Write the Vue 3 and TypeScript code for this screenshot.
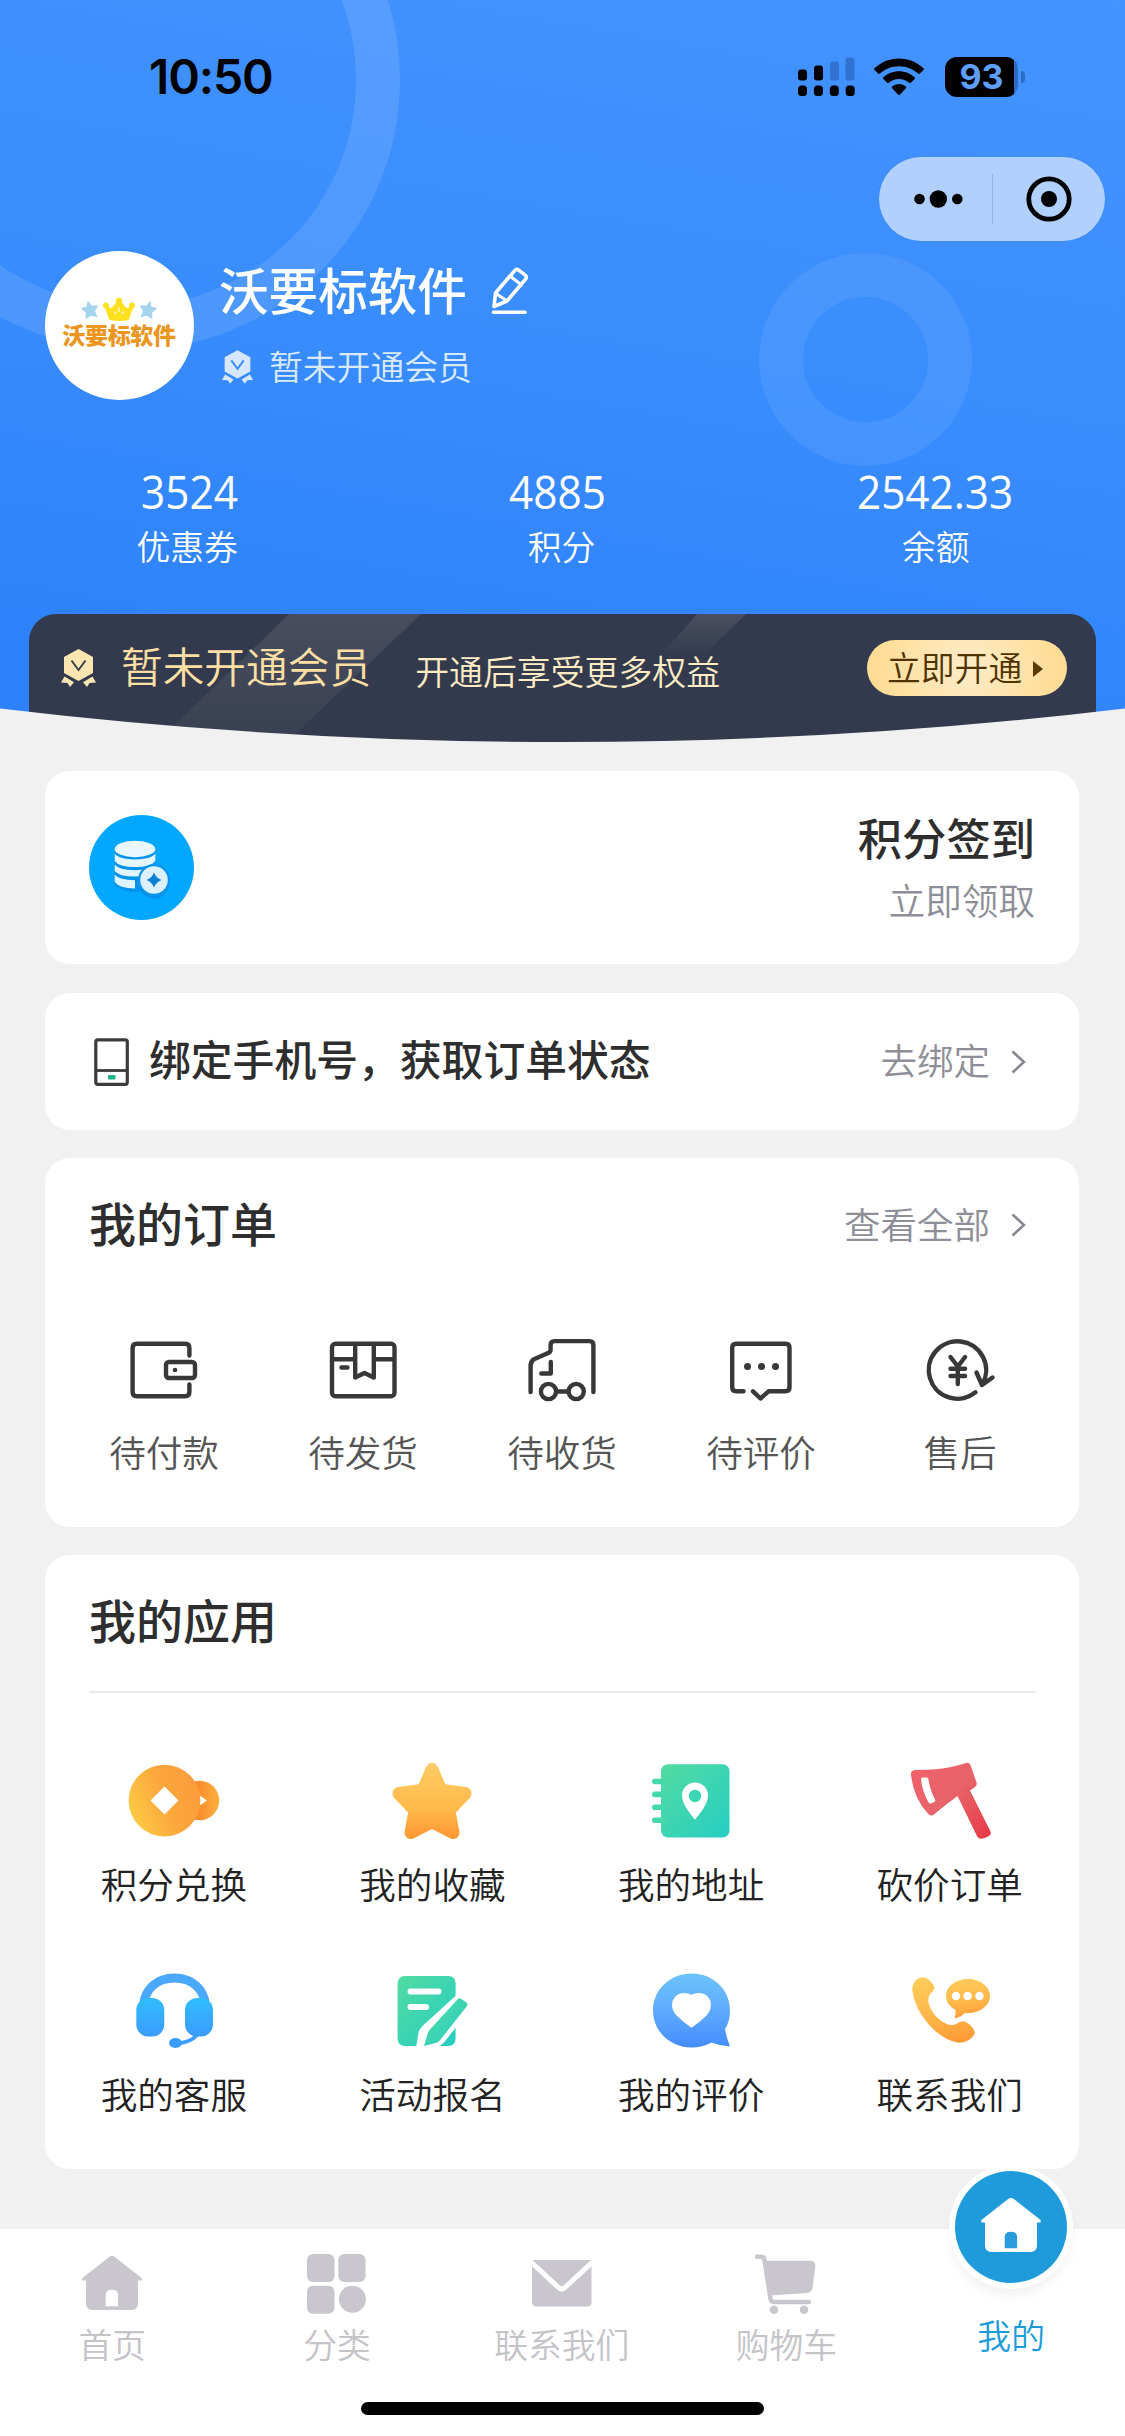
<script setup lang="ts">
interface Item {
  icon: string
  label: string
}

interface Stat {
  value: string
  label: string
  shift: number
}

const stats: Stat[] = [
  { value: '3524', label: '优惠券', shift: 5 },
  { value: '4885', label: '积分', shift: -9 },
  { value: '2542.33', label: '余额', shift: -2 },
]

const orders: Item[] = [
  { icon: 'wallet', label: '待付款' },
  { icon: 'box', label: '待发货' },
  { icon: 'truck', label: '待收货' },
  { icon: 'review', label: '待评价' },
  { icon: 'refund', label: '售后' },
]

const apps: Item[] = [
  { icon: 'coins', label: '积分兑换' },
  { icon: 'star', label: '我的收藏' },
  { icon: 'book', label: '我的地址' },
  { icon: 'axe', label: '砍价订单' },
  { icon: 'headset', label: '我的客服' },
  { icon: 'form', label: '活动报名' },
  { icon: 'heart', label: '我的评价' },
  { icon: 'phone', label: '联系我们' },
]

const tabs: Item[] = [
  { icon: 'home', label: '首页' },
  { icon: 'grid', label: '分类' },
  { icon: 'mail', label: '联系我们' },
  { icon: 'cart', label: '购物车' },
]
</script>

<template>
  <div class="page">
    <header class="hero">
      <div class="ring ring-lg"></div>
      <div class="ring ring-sm"></div>

      <div class="status">
        <span class="time">10:50</span>
        <div class="status-icons">
          <svg width="58" height="40" viewBox="0 0 58 40">
            <rect x="0" y="12.500" width="9" height="11" rx="3" />
            <rect x="16" y="8.500" width="9" height="15" rx="3" />
            <rect x="32" y="4.500" width="9" height="19" rx="3" fill="#2f72cf" />
            <rect x="47.500" y="0.500" width="9" height="23" rx="3" fill="#2f72cf" />
            <rect v-for="n in 4" :key="n" :x="(n - 1) * 15.900" y="28.500" width="9" height="10.500" rx="3.500" />
          </svg>
          <svg width="50" height="38" viewBox="0 0 50 38">
            <path d="M25 0.500C15.500 0.500 6.900 4.200 0.500 10.300q-.9.9 0 1.800l3.600 3.500q.9.8 1.800 0C11 10.900 17.700 8.200 25 8.200s14 2.700 19.100 7.400q.9.8 1.800 0l3.600-3.500q.9-.9 0-1.800C43.100 4.200 34.500.5 25 .5z" />
            <path d="M25 13.200c-6 0-11.500 2.300-15.600 6q-1 .9 0 1.900l3.800 3.600q.8.7 1.700 0c2.700-2.300 6.200-3.800 10.100-3.800s7.400 1.500 10.100 3.800q.9.700 1.700 0l3.800-3.600q1-1 0-1.900c-4.100-3.700-9.600-6-15.600-6z" />
            <path d="M25 26c-2.600 0-5 .9-6.800 2.400q-1 .9 0 1.900l5.900 6.400q.9.800 1.800 0l5.900-6.400q1-1 0-1.900C30 26.900 27.600 26 25 26z" />
          </svg>
          <div class="battery"><span>93</span></div>
        </div>
      </div>

      <div class="capsule">
        <svg width="49" height="20" viewBox="0 0 49 20">
          <circle cx="5.500" cy="10" r="5.300" />
          <circle cx="24.300" cy="10" r="8.700" />
          <circle cx="43.300" cy="10" r="5.300" />
        </svg>
        <i class="split"></i>
        <svg class="target" width="46" height="46" viewBox="0 0 46 46">
          <circle cx="23" cy="23" r="20.200" fill="none" stroke="#000" stroke-width="4.800" />
          <circle cx="23" cy="23" r="8" />
        </svg>
      </div>

      <section class="profile">
        <div class="avatar">
          <svg width="78" height="24" viewBox="0 0 78 24">
            <path d="M8 5l3.500 4.600 5.700-.5-3 5 2.300 5.300-5.400-1.600-4.700 3.200.1-5.900L2 11.500l5.300-1.300z" fill="#a5d4f0" stroke="#a5d4f0" stroke-width="1.500" stroke-linejoin="round" />
            <path d="M70 5l-3.500 4.600-5.700-.5 3 5-2.300 5.300 5.400-1.600 4.700 3.200-.1-5.900 4.500-3.600-5.300-1.300z" fill="#a5d4f0" stroke="#a5d4f0" stroke-width="1.500" stroke-linejoin="round" />
            <path d="M25 8l6 5 8-9 8 9 6-5-5 14q-9 2-18 0z" fill="#ffe11e" stroke="#ffe11e" stroke-width="2" stroke-linejoin="round" />
            <circle cx="39" cy="4" r="3.200" fill="#ffe11e" />
            <circle cx="26" cy="8.500" r="3" fill="#ffe11e" />
            <circle cx="52" cy="8.500" r="3" fill="#ffe11e" />
            <path d="M34 14.500l2.500 2.500M44 14.500l-2.500 2.500M39 10v5" stroke="#fff8c4" stroke-width="1.500" />
          </svg>
          <span>沃要标软件</span>
        </div>
        <div class="who">
          <div class="name-row">
            <h1>沃要标软件</h1>
            <svg width="42" height="50" viewBox="0 0 42 50" fill="none" stroke="#fff" stroke-width="3.600" stroke-linecap="round" stroke-linejoin="round">
              <path d="M5 40.500L6.500 27 25.500 4.800q2-2.300 4.200-.7l6.200 4.800q2.400 1.800.7 4.200L18 35z" />
              <path d="M21 10l11.500 9M7 27.500l11 7.500" stroke-width="3" />
              <path d="M4.500 46.200H36" />
            </svg>
          </div>
          <div class="badge-row">
            <svg width="31" height="34" viewBox="0 0 35 38">
              <path d="M17.500 0L32 8v16l-14.500 8L3 24V8z" fill="#d6e7ff" />
              <path d="M3.500 27.500l9.500 5.700-4 4.800-2.500-4-6.500-.4zM31.500 27.500L22 33.200l4 4.800 2.500-4 6.500-.4z" fill="#d6e7ff" />
              <path d="M10.500 11.500l7 9.500 7-9.500" fill="none" stroke="#3d8dfb" stroke-width="2.200" />
            </svg>
            <span>暂未开通会员</span>
          </div>
        </div>
      </section>

      <section class="stats">
        <div v-for="s in stats" :key="s.label" class="stat">
          <strong :style="{ marginLeft: s.shift + 'px' }">{{ s.value }}</strong>
          <span>{{ s.label }}</span>
        </div>
      </section>

      <section class="vip">
        <svg class="shine" width="1068" height="129" viewBox="0 0 1068 129">
          <defs>
            <linearGradient id="shineA" x1="0" y1="0" x2="0" y2="1">
              <stop offset="0" stop-color="#fff" stop-opacity=".1" />
              <stop offset="1" stop-color="#fff" stop-opacity=".03" />
            </linearGradient>
            <linearGradient id="shineB" x1="0" y1="0" x2="0" y2="1">
              <stop offset="0" stop-color="#fff" stop-opacity=".11" />
              <stop offset="1" stop-color="#fff" stop-opacity=".01" />
            </linearGradient>
          </defs>
          <path d="M260 0h132L257 129H127z" fill="url(#shineA)" />
          <path d="M668 0h49l-41 40h-43z" fill="url(#shineB)" />
        </svg>
        <svg class="medal" width="35" height="38" viewBox="0 0 35 38">
          <path d="M17.500 0L32 8v16l-14.500 8L3 24V8z" fill="#fde5b2" />
          <path d="M3.500 27.500l9.500 5.700-4 4.800-2.500-4-6.500-.4zM31.500 27.500L22 33.200l4 4.800 2.500-4 6.500-.4z" fill="#fde5b2" />
          <path d="M10.500 11.500l7 9.500 7-9.500" fill="none" stroke="#333a4d" stroke-width="1.900" />
        </svg>
        <span class="vip-title">暂未开通会员</span>
        <span class="vip-sub">开通后享受更多权益</span>
        <button class="vip-btn">立即开通<i></i></button>
      </section>

      <svg class="curve" width="1125" height="36" viewBox="0 0 1125 36" preserveAspectRatio="none">
        <path d="M0 1.500Q562.500 68.500 1125 1.500V37H0z" fill="#f1f1f1" />
      </svg>
    </header>

    <main class="cards">
      <section class="card sign">
        <svg width="105" height="105" viewBox="0 0 105 105">
          <circle cx="52.500" cy="52.500" r="52.500" fill="#02a7ff" />
          <g fill="#0584dd" opacity=".55" transform="translate(0 3)">
            <ellipse cx="46" cy="35" rx="20.500" ry="8.500" />
            <path d="M25.500 40h41v28q-20 12-41 0z" />
            <circle cx="65" cy="66" r="15" />
          </g>
          <ellipse cx="46" cy="34" rx="20.300" ry="8.300" fill="#e9f8ff" />
          <path d="M25.700 38.800Q30 44.500 46 44.500T66.300 38.800V46q-4 6-20.300 6T25.700 46z" fill="#e6f6ff" />
          <path d="M25.700 49.500Q30 55.200 46 55.200T66.300 49.500V56q-4 5.500-20.300 5.500T25.700 56z" fill="#e2f4ff" />
          <path d="M25.700 59.500Q30 65.200 46 65.200V73.500Q30 73 25.700 67z" fill="#def2ff" />
          <circle cx="65" cy="65" r="16" fill="#0a94ea" />
          <circle cx="65" cy="65" r="13.800" fill="#dbf1ff" />
          <path d="M65 57.500Q67 63 72.500 65 67 67 65 72.500 63 67 57.500 65 63 63 65 57.500z" fill="#0b7fd6" />
        </svg>
        <div class="sign-text">
          <h2>积分签到</h2>
          <span>立即领取</span>
        </div>
      </section>

      <section class="card bind">
        <svg width="36" height="48" viewBox="0 0 36 48" fill="none">
          <rect x="1.800" y="1.800" width="31.500" height="44.500" rx="2" stroke="#3c3c3c" stroke-width="3.200" />
          <path d="M2 32.500h31" stroke="#3c3c3c" stroke-width="2.800" />
          <rect x="14" y="37" width="7.500" height="4.500" rx="1" fill="#1fb38a" />
        </svg>
        <h3>绑定手机号，获取订单状态</h3>
        <span class="more">去绑定
          <svg width="15" height="24" viewBox="0 0 15 24"><path d="M1.500 1.500L13 12 1.500 22.500" fill="none" stroke="#85858f" stroke-width="2.500" /></svg>
        </span>
      </section>

      <section class="card order">
        <div class="card-head">
          <h2>我的订单</h2>
          <span class="more">查看全部
            <svg width="15" height="24" viewBox="0 0 15 24"><path d="M1.500 1.500L13 12 1.500 22.500" fill="none" stroke="#85858f" stroke-width="2.500" /></svg>
          </span>
        </div>
        <div class="order-grid">
          <div v-for="o in orders" :key="o.icon" class="cell">
            <svg width="80" height="80" viewBox="0 0 80 80" fill="none" stroke="#383838" stroke-width="4.400" stroke-linecap="round" stroke-linejoin="round">
              <template v-if="o.icon === 'wallet'">
                <path d="M65.400 25.500V18q0-4.200-4.200-4.200H12.800q-4.200 0-4.200 4.200v44q0 4.200 4.200 4.200h48.400q4.200 0 4.200-4.200v-7.500" />
                <rect x="42" y="32" width="29" height="16" rx="3" />
                <circle cx="51" cy="40" r="2.300" fill="#383838" stroke="none" />
              </template>
              <template v-else-if="o.icon === 'box'">
                <rect x="9" y="13.800" width="62.500" height="52.400" rx="3.500" />
                <path d="M9 29.200h23M53 29.200h18" stroke-linecap="butt" />
                <path d="M32.200 14v33.500l9.300-4.500 9.300 4.500V14M18.500 37.500h6" />
              </template>
              <template v-else-if="o.icon === 'truck'">
                <path d="M8.600 62V36q0-4 2.800-6.500L26.700 22.800q1.900-1 1.900-3V15q0-3.900 3.900-3.900h35q3.900 0 3.900 3.900v47" />
                <path d="M28.800 32v11.500h-9.500" />
                <circle cx="26.500" cy="61.500" r="7.600" />
                <circle cx="54.200" cy="61.500" r="7.600" />
                <path d="M35 61.500h11" />
              </template>
              <template v-else-if="o.icon === 'review'">
                <path d="M22.500 61.300h-7.300q-4 0-4-4V17.800q0-4 4-4h49.300q4 0 4 4v39.500q0 4-4 4H47.500L39.500 68.500 32 61.300" />
                <g fill="#383838" stroke="none">
                  <circle cx="26.500" cy="36.500" r="3.500" />
                  <circle cx="40.500" cy="36.500" r="3.500" />
                  <circle cx="54.500" cy="36.500" r="3.500" />
                </g>
              </template>
              <template v-else>
                <path d="M55.500 62.300A28.700 28.700 0 1 1 62.500 54" />
                <path d="M56.500 42.500l5.500 12.500 10.500-7.500" />
                <path d="M30.500 27l7.300 9.500 7.300-9.500M37.800 36.500V54M30.500 38.800h14.600M30.500 46h14.600" />
              </template>
            </svg>
            <span>{{ o.label }}</span>
          </div>
        </div>
      </section>

      <section class="card apps">
        <div class="card-head">
          <h2>我的应用</h2>
        </div>
        <hr />
        <svg width="0" height="0" class="defs">
          <defs>
            <linearGradient id="gGold" x1=".4" y1="0" x2=".6" y2="1">
              <stop offset="0" stop-color="#ffcb5a" />
              <stop offset=".6" stop-color="#ffb548" />
              <stop offset="1" stop-color="#ff9a35" />
            </linearGradient>
            <linearGradient id="gStar" gradientUnits="userSpaceOnUse" x1="46" y1="0" x2="46" y2="79">
              <stop offset="0" stop-color="#ffcc66" />
              <stop offset=".6" stop-color="#ffba4a" />
              <stop offset="1" stop-color="#ff9530" />
            </linearGradient>
            <linearGradient id="gCoin" x1="0" y1=".7" x2="1" y2=".3">
              <stop offset="0" stop-color="#ffcc45" />
              <stop offset=".5" stop-color="#fba83c" />
              <stop offset="1" stop-color="#fd9a3c" />
            </linearGradient>
            <linearGradient id="gCoinSm" x1="0" y1="0" x2="1" y2="0">
              <stop offset=".5" stop-color="#f88f2e" />
              <stop offset="1" stop-color="#ffb03f" />
            </linearGradient>
            <linearGradient id="gGreen" x1="0" y1="0" x2="1" y2="1">
              <stop offset="0" stop-color="#52dca0" />
              <stop offset="1" stop-color="#26cdc4" />
            </linearGradient>
            <linearGradient id="gRed" x1="0" y1="0" x2="1" y2="1">
              <stop offset="0" stop-color="#f2606a" />
              <stop offset=".45" stop-color="#e8646a" />
              <stop offset="1" stop-color="#e73a45" />
            </linearGradient>
            <linearGradient id="gBlue" x1=".5" y1="0" x2=".5" y2="1">
              <stop offset="0" stop-color="#6cc3fb" />
              <stop offset=".5" stop-color="#5fabff" />
              <stop offset="1" stop-color="#448cff" />
            </linearGradient>
            <linearGradient id="gPad" x1="0" y1="0" x2="0" y2="1">
              <stop offset="0" stop-color="#31bdff" />
              <stop offset="1" stop-color="#3b9bff" />
            </linearGradient>
          </defs>
        </svg>
        <div class="app-grid">
          <div v-for="a in apps" :key="a.icon" class="cell">
            <svg width="92" height="80" viewBox="0 0 92 80">
              <template v-if="a.icon === 'coins'">
                <circle cx="71.500" cy="39.500" r="19.800" fill="url(#gCoinSm)" />
                <path d="M71 34l8 5.500-8 5.500z" fill="#fff" />
                <circle cx="36.500" cy="39.600" r="35.900" fill="url(#gCoin)" />
                <path d="M36.500 25.500L50.500 39.600 36.500 53.500 22.500 39.600z" fill="#fff" />
              </template>
              <path v-else-if="a.icon === 'star'" d="M46 8.500L54.800 29.300 79 32.500 62.800 49.500 67 71.500 46 60.800 25 71.500 29.200 49.500 13 32.500 37.200 29.300z" fill="url(#gStar)" stroke="url(#gStar)" stroke-width="13" stroke-linejoin="round" />
              <template v-else-if="a.icon === 'book'">
                <rect x="16" y="3.300" width="68.500" height="73.300" rx="7" fill="url(#gGreen)" />
                <rect v-for="n in 4" :key="n" x="7" :y="4.800 + n * 12.900" width="14" height="5.600" rx="2.800" fill="#45d8ab" />
                <path d="M50 58.800C45 52 37 43.500 37 34.500a13 13 0 0 1 26 0C63 43.500 55 52 50 58.800z" fill="#fff" />
                <circle cx="50" cy="35" r="6.200" fill="#3bd5b2" />
              </template>
              <template v-else-if="a.icon === 'axe'">
                <path d="M11 9Q35 9 47 6 56 4 62 2q3-.8 4.500 2l6 17.500q.8 2.800-1.500 4.500l-5 3.500 20.500 41q1.200 3-1.500 4.500-4 2.500-8 2.800-2.500 0-3.800-2.200L53.500 35Q40 45 29.500 53.700q-2.500 1.800-4.700-.2Q9 37 7 13q-.2-3.500 4-4z" fill="url(#gRed)" />
                <path d="M18.500 16.500h4q1.500 0 1.800 1.500Q26 29 31 38.500q.8 1.800-.8 2.500L27 42.500q-1.500.6-2.400-1Q18 30 17 18q0-1.500 1.500-1.500z" fill="#fff" />
              </template>
              <template v-else-if="a.icon === 'headset'">
                <path d="M15.500 34C17 18 29 7 46.500 7S76 18 77.500 34" fill="none" stroke="#4aa8ff" stroke-width="9" />
                <rect x="8.300" y="27" width="28" height="38.500" rx="12" fill="url(#gPad)" />
                <rect x="57" y="27" width="28" height="38.500" rx="12" fill="url(#gPad)" />
                <path d="M69 64Q63 71 50 72.500" fill="none" stroke="#3b9dff" stroke-width="3.500" />
                <ellipse cx="47.500" cy="72" rx="6.500" ry="5" fill="#3b9dff" />
              </template>
              <template v-else-if="a.icon === 'form'">
                <rect x="11.600" y="5" width="58" height="70" rx="7" fill="url(#gGreen)" />
                <path d="M24.500 20.500h28M24.500 36h15.500" stroke="#fff" stroke-width="6" stroke-linecap="round" />
                <path d="M74 27.500l7.500 6L54 68.500q-2 2.500-5 3.300L34.500 80 37.500 62 40 58.500z" fill="#fff" stroke="#fff" stroke-width="10" />
                <path d="M71.500 28.500q2-2 4-.5l5 3.800q1.800 1.500.3 3.500L55 68q-2 3-5.500 4L38 75l4-13.500q.5-1.500 1.500-2.500z" fill="url(#gGreen)" />
              </template>
              <template v-else-if="a.icon === 'heart'">
                <path d="M46.500 2.500C68 2.500 85 18.500 85 39.500q0 11-5 18.500 1.500 9 5 17.500-9.500-.5-18.500-4-9 5-20 5C25.500 76.500 8 60.500 8 39.500S25.500 2.500 46.500 2.500z" fill="url(#gBlue)" />
                <path d="M46.500 56.800Q38 51 31.500 44.500C26 39 25.500 30 30.500 25.500 35 21 42 21.500 46.500 24c4.500-2.500 11.500-3 16 1.500 5 4.500 4.500 13.500-1 19Q55 51 46.500 56.800z" fill="#fff" />
              </template>
              <template v-else>
                <path d="M17.500 6.500C22 5 28 11 30.300 15.500c1 5-5.800 6-6 13.500C24.500 39 35.500 52 46.500 54c5.500.8 8-3.700 12.500-3.700 4.500.2 10.500 6.200 12 11.200C69 68 61 72.500 53 71.500 33 68 12 43 8.500 21 7.500 13.500 11 7.500 17.500 6.500z" fill="url(#gGold)" />
                <path d="M64 8C76 8 86 15.500 86 25S76 42 64 42q-1.500 0-3 0-4 4-10.500 5.500 1.500-4 1-8.500Q42 34 42 25C42 15.500 52 8 64 8z" fill="url(#gGold)" />
                <g fill="#fff">
                  <circle cx="52" cy="25" r="4.200" />
                  <circle cx="63.600" cy="25" r="4.200" />
                  <circle cx="75.500" cy="25" r="4.200" />
                </g>
              </template>
            </svg>
            <span>{{ a.label }}</span>
          </div>
        </div>
      </section>
    </main>

    <nav class="tabbar">
      <div class="tabs">
        <div v-for="t in tabs" :key="t.icon" class="tab">
          <svg width="64" height="64" viewBox="0 0 64 64" fill="#c9c6cd">
            <template v-if="t.icon === 'home'">
              <path d="M28.500 5.500q3.500-2.800 7 0L61 25.500q1.500 1.500.5 3h-3.500V51.500q0 6.500-6.500 6.500h-39Q6 58 6 51.500V28.500H2.500q-1-1.500.5-3z" />
              <path d="M25.700 54.200V43q0-5.200 6.200-5.200t6.200 5.200v11.200z" fill="#fff" />
            </template>
            <template v-else-if="t.icon === 'grid'">
              <rect x="2" y="2" width="27.500" height="28" rx="6" />
              <rect x="33.300" y="2" width="27.200" height="28" rx="6" />
              <rect x="2" y="33.700" width="27.500" height="28" rx="6" />
              <circle cx="47.400" cy="47.200" r="13.500" />
            </template>
            <template v-else-if="t.icon === 'mail'">
              <path d="M2 8h59.500v42q0 4.500-4.500 4.500H6.500Q2 54.500 2 50z" />
              <path d="M0 9l28.500 26.500q3.200 3 6.400 0L63.500 9" fill="none" stroke="#fff" stroke-width="5" />
            </template>
            <template v-else>
              <path d="M3 4.800h4.500q2.500 0 3 3L16.500 47q.4 3 3.500 3h35" fill="none" stroke="#c9c6cd" stroke-width="4.500" stroke-linecap="round" />
              <path d="M11 8.800h44.500q6.500 0 5.800 6.500L58.500 36q-.6 4.500-5.500 5L16 43.500z" />
              <circle cx="20" cy="57.700" r="4.300" />
              <circle cx="50" cy="57.700" r="4.300" />
            </template>
          </svg>
          <span>{{ t.label }}</span>
        </div>
        <div class="tab active">
          <div class="bubble">
            <svg width="64" height="64" viewBox="0 0 64 64" fill="#fff">
              <path d="M28.500 5.500q3.500-2.800 7 0L61 25.500q1.500 1.500.5 3h-3.500V51.500q0 6.500-6.500 6.500h-39Q6 58 6 51.500V28.500H2.500q-1-1.500.5-3z" />
              <path d="M25.700 54.200V43q0-5.200 6.200-5.200t6.200 5.200v11.200z" fill="#2b9bdb" />
            </svg>
          </div>
          <span>我的</span>
        </div>
      </div>
      <div class="home-bar"></div>
    </nav>
  </div>
</template>

<style>
body {
  margin: 0;
  background: #f1f1f1;
}
</style>

<style scoped>
.page {
  width: 1125px;
  height: 2436px;
  display: flex;
  flex-direction: column;
  overflow: hidden;
  background: #f1f1f1;
  font-family: "Noto Sans CJK SC", sans-serif;
  font-weight: 350;
}
svg { display: block; flex: none; }
h1, h2, h3 { margin: 0; font-weight: 500; }

.hero {
  position: relative;
  height: 743px;
  display: flex;
  flex-direction: column;
  overflow: hidden;
  background: linear-gradient(190deg, #4493ff 0%, #3a8dfd 45%, #2d82fb 90%);
}
.ring {
  position: absolute;
  box-sizing: border-box;
  border-radius: 50%;
}
.ring-lg {
  left: -140px;
  top: -190px;
  width: 540px;
  height: 540px;
  border: 44px solid rgba(255, 255, 255, .11);
}
.ring-sm {
  left: 759px;
  top: 253px;
  width: 213px;
  height: 213px;
  border: 44px solid rgba(255, 255, 255, .07);
}

.status {
  position: relative;
  height: 153px;
  display: flex;
  align-items: center;
  justify-content: space-between;
  padding: 0 107px 0 149px;
}
.time {
  font: 600 48px/60px Inter, sans-serif;
  color: #000;
  letter-spacing: -1.100px;
}
.status-icons { display: flex; align-items: center; gap: 18px; }
.battery {
  position: relative;
  width: 73px;
  height: 40px;
  margin-left: 3px;
  border-radius: 12px;
  background: linear-gradient(90deg, #000 69px, #2c6cc4 69px);
  color: #5f9ffc;
  font: 700 34px/40px Inter, sans-serif;
  text-align: center;
}
.battery::after {
  content: "";
  position: absolute;
  left: 76px;
  top: 14px;
  width: 4px;
  height: 12px;
  border-radius: 0 4px 4px 0;
  background: #2c6cc4;
}

.capsule {
  position: relative;
  box-sizing: border-box;
  align-self: flex-end;
  display: flex;
  align-items: center;
  width: 226px;
  height: 84px;
  margin: 4px 20px 0 0;
  padding-left: 35px;
  border-radius: 42px;
  background: #b1d0fd;
  box-shadow: 0 0 0 1px rgba(60, 130, 230, .25);
}
.split {
  width: 1.500px;
  height: 50px;
  margin-left: 28.500px;
  background: #93b3e4;
}
.target { margin-left: 33px; }

.profile {
  position: relative;
  display: flex;
  margin: 10px 0 0 44.500px;
  height: 149px;
}
.avatar {
  width: 149px;
  height: 149px;
  box-sizing: border-box;
  padding-top: 46px;
  border-radius: 50%;
  background: #fff;
  display: flex;
  flex-direction: column;
  align-items: center;
}
.avatar span {
  font-size: 23px;
  line-height: 26px;
  font-weight: 900;
  color: #ea9620;
  letter-spacing: -.3px;
}
.who { padding: 7px 0 0 25.500px; }
.name-row { display: flex; align-items: center; gap: 22px; }
.name-row h1 { font-size: 49.600px; line-height: 60px; color: #fff; }
.name-row svg { margin-top: 5px; }
.badge-row {
  display: flex;
  align-items: center;
  gap: 16px;
  margin: 28px 0 0 3px;
  font-size: 33.800px;
  line-height: 40px;
  color: #d9e9ff;
}
.badge-row svg { margin-top: 2px; }

.stats {
  position: relative;
  display: grid;
  grid-template-columns: repeat(3, 1fr);
  width: 1123px;
  margin-top: 62px;
  text-align: center;
}
.stat { display: flex; flex-direction: column; align-items: center; color: #fff; }
.stat strong {
  font: 400 45px/60px "Open Sans", sans-serif;
  transform: scaleX(.94);
}
.stat span { margin-top: 4px; font-size: 33.800px; line-height: 40px; }

.vip {
  position: relative;
  box-sizing: border-box;
  height: 129px;
  margin: 48px 29px 0 29px;
  padding: 0 29px 21px 32px;
  border-radius: 27px 27px 0 0;
  background: #333a4d;
  display: flex;
  align-items: center;
  overflow: hidden;
}
.shine { position: absolute; left: 0; top: 0; }
.vip > :not(.shine) { position: relative; }
.vip-title {
  margin-left: 25px;
  padding-bottom: 7px;
  font-size: 41.700px;
  line-height: 50px;
  color: #fddfa4;
}
.vip-sub {
  margin-left: 44px;
  padding-top: 5px;
  font-size: 33.900px;
  line-height: 40px;
  color: #fdecc4;
}
.vip-btn {
  display: flex;
  align-items: center;
  width: 200px;
  height: 56px;
  margin-left: auto;
  padding: 0 0 4px 20px;
  box-sizing: border-box;
  border: 0;
  border-radius: 28px;
  background: radial-gradient(circle at 50% 50%, #fdecc8, #ffdc94 90%);
  color: #4f3300;
  font: inherit;
  font-size: 33.800px;
}
.vip-btn i {
  margin: 5px 0 0 11px;
  border: 8.500px solid transparent;
  border-left: 10.500px solid #5a3a00;
  border-right: 0;
}
.curve { position: absolute; left: 0; bottom: 0; }

.cards {
  flex: 1;
  padding: 28px 46px 0 44.500px;
}
.card {
  box-sizing: border-box;
  margin-bottom: 28px;
  border-radius: 25px;
  background: #fff;
  color: #2e2e2e;
}
.card h2 { font-size: 47px; line-height: 60px; }
.more {
  display: flex;
  align-items: center;
  gap: 21px;
  font-size: 36.500px;
  line-height: 44px;
  color: #8e8e98;
}
.more svg { margin-top: 3px; }
.sign {
  display: flex;
  align-items: center;
  justify-content: space-between;
  height: 193px;
  margin-bottom: 29px;
  padding: 0 44px;
}
.sign-text {
  display: flex;
  flex-direction: column;
  align-items: flex-end;
  padding-bottom: 4px;
}
.sign-text h2 { font-size: 44.300px; line-height: 60px; }
.sign-text span { margin-top: 8px; font-size: 36.600px; line-height: 50px; color: #8e8e98; }

.bind {
  display: flex;
  align-items: center;
  height: 137px;
  padding: 0 53px 0 49.500px;
}
.bind h3 {
  margin-left: 19px;
  padding-bottom: 8px;
  font-size: 41.800px;
  line-height: 54px;
}
.bind .more { margin-left: auto; padding-bottom: 3px; }

.order { height: 369px; }
.card-head {
  display: flex;
  align-items: center;
  justify-content: space-between;
  height: 60px;
  padding: 34px 53px 0 44.500px;
}
.card-head .more { padding-top: 3px; }
.order-grid {
  display: grid;
  grid-template-columns: repeat(5, 1fr);
  margin: 78px 19.500px 0 20px;
}
.cell { display: flex; flex-direction: column; align-items: center; }
.cell span { line-height: 44px; font-size: 36.600px; }
.order-grid .cell span { margin-top: 20px; color: #555; }

.apps { height: 614px; margin: 0; }
.apps hr {
  height: 2px;
  margin: 42px 43px 0 44px;
  border: 0;
  background: #ebebeb;
}
.defs { position: absolute; }
.app-grid {
  display: grid;
  grid-template-columns: repeat(4, 1fr);
  grid-auto-rows: 209.500px;
  padding-top: 68px;
}
.app-grid .cell span { margin-top: 21px; color: #222; }

.tabbar {
  height: 207px;
  background: #fff;
  display: flex;
  flex-direction: column;
  align-items: center;
}
.tabs {
  align-self: flex-start;
  display: grid;
  grid-template-columns: repeat(5, 1fr);
  width: 1123.500px;
  height: 173px;
}
.tab {
  display: flex;
  flex-direction: column;
  align-items: center;
  padding-top: 23px;
  font-size: 33.800px;
  line-height: 40px;
  color: #c4c3c8;
}
.tab span { margin-top: 8px; }
.tab.active { padding-top: 0; color: #1c9ad9; }
.bubble {
  width: 112.500px;
  height: 112.500px;
  margin-top: -58.500px;
  display: flex;
  align-items: center;
  justify-content: center;
  border-radius: 50%;
  background: #1f9bdb;
  box-shadow: 0 0 0 6px #fff, 0 8px 12px 4px rgba(0, 0, 0, .06);
}
.tab.active span { margin-top: 32px; }
.bubble svg { margin-bottom: 2px; }
.home-bar {
  width: 403px;
  height: 13px;
  border-radius: 7px;
  background: #000;
}
</style>
